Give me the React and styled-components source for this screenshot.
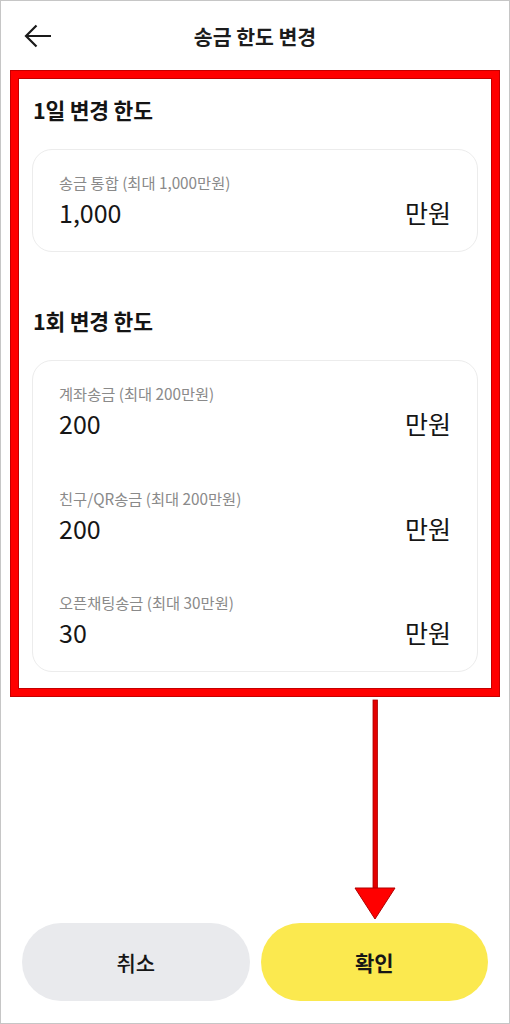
import React from "react";
import styled, { createGlobalStyle } from "styled-components";

const GlobalStyle = createGlobalStyle`
  * {
    box-sizing: border-box;
  }
  body {
    margin: 0;
    background: #ffffff;
    font-family: "Noto Sans CJK KR", "Noto Sans", sans-serif;
    color: #1a1a1a;
  }
`;

const Frame = styled.div`
  position: relative;
  width: 510px;
  height: 1024px;
  border: 1px solid #c6c6c6;
  background: #fff;
  display: flex;
  flex-direction: column;
`;

const Header = styled.header`
  position: relative;
  height: 70px;
  display: flex;
  align-items: center;
  justify-content: center;
`;

const BackButton = styled.button`
  position: absolute;
  left: 21px;
  top: 21px;
  width: 32px;
  height: 28px;
  padding: 0;
  border: 0;
  background: none;
  display: flex;
  align-items: center;
  justify-content: center;
`;

const Title = styled.h1`
  margin: 0;
  font-size: 20.5px;
  font-weight: 600;
  color: #1c1c1c;
`;

const Highlight = styled.div`
  margin: 0 10px;
  border: 7px solid #ff0000;
  box-shadow: inset 0 0 0 1px #c40000, 0 0 0 1px #c40000;
  padding: 18px 14px 17px;
`;

const SectionTitle = styled.h2`
  margin: ${({ $first }) => ($first ? "0" : "55px")} 0 25px 1px;
  font-size: 21.5px;
  line-height: 28px;
  font-weight: 700;
  letter-spacing: -0.2px;
  color: #141414;
`;

const Card = styled.div`
  border: 1px solid #ececec;
  border-radius: 20px;
  padding: 22px 26px 23px;
  display: flex;
  flex-direction: column;
  gap: 48.5px;
`;

const Field = styled.div`
  display: flex;
  flex-direction: column;
  gap: 4px;
`;

const Label = styled.span`
  font-size: 15.3px;
  line-height: 20px;
  color: #8a8a8a;
`;

const ValueRow = styled.div`
  display: flex;
  align-items: center;
  justify-content: space-between;
  height: 32px;
  font-size: 25px;
  color: #161616;
`;

const Spacer = styled.div`
  flex: 1;
`;

const ButtonRow = styled.div`
  display: flex;
  gap: 11px;
  padding: 0 21px 22px;
`;

const ActionButton = styled.button`
  flex: 1;
  height: 78px;
  border: 0;
  border-radius: 39px;
  background: ${({ $primary }) => ($primary ? "#fbe94f" : "#e9eaed")};
  font-family: inherit;
  font-size: 21px;
  font-weight: ${({ $primary }) => ($primary ? 700 : 500)};
  color: #161616;
`;

const Pointer = styled.svg`
  position: absolute;
  left: 352px;
  top: 697px;
`;

const daily = [{ label: "송금 통합 (최대 1,000만원)", value: "1,000" }];

const perTime = [
  { label: "계좌송금 (최대 200만원)", value: "200" },
  { label: "친구/QR송금 (최대 200만원)", value: "200" },
  { label: "오픈채팅송금 (최대 30만원)", value: "30" },
];

const LimitCard = ({ items }) => (
  <Card>
    {items.map((item) => (
      <Field key={item.label}>
        <Label>{item.label}</Label>
        <ValueRow>
          <span>{item.value}</span>
          <span>만원</span>
        </ValueRow>
      </Field>
    ))}
  </Card>
);

const App = () => {
  return (
    <>
      <GlobalStyle />
      <Frame>
        <Header>
          <BackButton aria-label="뒤로">
            <svg width="28" height="24" viewBox="0 0 28 24" fill="none">
              <path
                d="M27 12H2.5M12.5 1.5L2 12l10.5 10.5"
                stroke="#1a1a1a"
                strokeWidth="2.2"
              />
            </svg>
          </BackButton>
          <Title>송금 한도 변경</Title>
        </Header>
        <Highlight>
          <SectionTitle $first>1일 변경 한도</SectionTitle>
          <LimitCard items={daily} />
          <SectionTitle>1회 변경 한도</SectionTitle>
          <LimitCard items={perTime} />
        </Highlight>
        <Spacer />
        <ButtonRow>
          <ActionButton>취소</ActionButton>
          <ActionButton $primary>확인</ActionButton>
        </ButtonRow>
        <Pointer width="44" height="224" viewBox="0 0 44 224">
          <rect x="20" y="2" width="4.5" height="192" fill="#e30000" stroke="#a80000" strokeWidth="0.8" />
          <polygon points="2,190 42,190 22,221" fill="#ff0000" stroke="#b00000" strokeWidth="1" />
        </Pointer>
      </Frame>
    </>
  );
};

export default App;
